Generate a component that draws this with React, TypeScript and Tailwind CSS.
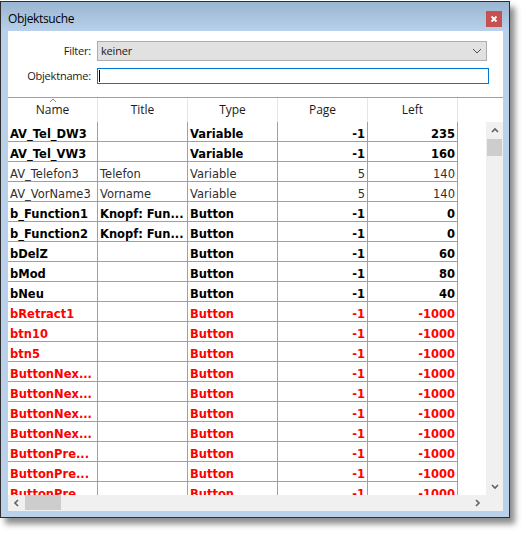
import React from "react";

type Row = { name: string; title: string; type: string; page: string; left: string; s: "b" | "n" | "r" };

const rows: Row[] = [
  { name: "AV_Tel_DW3", title: "", type: "Variable", page: "-1", left: "235", s: "b" },
  { name: "AV_Tel_VW3", title: "", type: "Variable", page: "-1", left: "160", s: "b" },
  { name: "AV_Telefon3", title: "Telefon", type: "Variable", page: "5", left: "140", s: "n" },
  { name: "AV_VorName3", title: "Vorname", type: "Variable", page: "5", left: "140", s: "n" },
  { name: "b_Function1", title: "Knopf: Fun...", type: "Button", page: "-1", left: "0", s: "b" },
  { name: "b_Function2", title: "Knopf: Fun...", type: "Button", page: "-1", left: "0", s: "b" },
  { name: "bDelZ", title: "", type: "Button", page: "-1", left: "60", s: "b" },
  { name: "bMod", title: "", type: "Button", page: "-1", left: "80", s: "b" },
  { name: "bNeu", title: "", type: "Button", page: "-1", left: "40", s: "b" },
  { name: "bRetract1", title: "", type: "Button", page: "-1", left: "-1000", s: "r" },
  { name: "btn10", title: "", type: "Button", page: "-1", left: "-1000", s: "r" },
  { name: "btn5", title: "", type: "Button", page: "-1", left: "-1000", s: "r" },
  { name: "ButtonNex...", title: "", type: "Button", page: "-1", left: "-1000", s: "r" },
  { name: "ButtonNex...", title: "", type: "Button", page: "-1", left: "-1000", s: "r" },
  { name: "ButtonNex...", title: "", type: "Button", page: "-1", left: "-1000", s: "r" },
  { name: "ButtonNex...", title: "", type: "Button", page: "-1", left: "-1000", s: "r" },
  { name: "ButtonPre...", title: "", type: "Button", page: "-1", left: "-1000", s: "r" },
  { name: "ButtonPre...", title: "", type: "Button", page: "-1", left: "-1000", s: "r" },
  { name: "ButtonPre...", title: "", type: "Button", page: "-1", left: "-1000", s: "r" },
];

const styleCls = {
  b: "font-bold text-black",
  n: "font-normal text-[#2e2e2e]",
  r: "font-bold text-[#ff0000]",
};

const cell = "w-[90px] shrink-0 h-[20px] border-r border-b border-[#a0a0a0] px-[2px] pt-[5px] leading-[14px] whitespace-nowrap overflow-hidden";

function Chevron({ dir }: { dir: "up" | "down" | "left" | "right" }) {
  const d =
    dir === "up"
      ? "M1 5 L4 2 L7 5"
      : dir === "down"
      ? "M1 2 L4 5 L7 2"
      : dir === "left"
      ? "M5 1 L2 4 L5 7"
      : "M2 1 L5 4 L2 7";
  return (
    <svg width="8" height="8" viewBox="0 0 8 8">
      <path d={d} fill="none" stroke="#606060" strokeWidth="1.6" />
    </svg>
  );
}

export default function App() {
  const headers = ["Name", "Title", "Type", "Page", "Left"];
  return (
    <div className="w-[526px] h-[534px] bg-white pt-[1px]">
      <div className="w-[510px] h-[517px] border border-[#2e2e2e] bg-[#b9d1ea] flex flex-col shadow-[5px_6px_6px_rgba(0,0,0,0.45)]">
        {/* title bar */}
        <div className="h-[29px] shrink-0 bg-gradient-to-b from-[#9ab5d1] to-[#b9d1ea] flex items-start justify-between pl-[7px] pr-[7px] pt-[9px]">
          <span className="text-[12px] leading-[16px] text-black tracking-[-0.35px] font-['Open_Sans',sans-serif]">Objektsuche</span>
          <div className="w-[16px] h-[16px] bg-[#c75050] flex items-center justify-center">
            <svg width="8" height="8" viewBox="0 0 8 8">
              <path d="M1.5 1.5 L6.5 6.5 M6.5 1.5 L1.5 6.5" stroke="white" strokeWidth="1.8" />
            </svg>
          </div>
        </div>
        {/* client */}
        <div className="ml-[7px] mr-[6px] h-[480px] bg-white flex flex-col font-['Open_Sans',sans-serif]">
          <div className="mt-[10px] h-[20px] flex items-center">
            <div className="w-[83px] text-right text-[11px] tracking-[-0.2px] text-[#1a1a1a]">Filter:</div>
            <div className="ml-[6px] w-[390px] h-[20px] border border-[#adadad] bg-[#e1e1e1] flex items-center justify-between pl-[3px] pr-[4px]">
              <span className="text-[11px] text-[#1a1a1a] tracking-[-0.2px]">keiner</span>
              <svg width="10" height="6" viewBox="0 0 10 6">
                <path d="M1 1 L5 5 L9 1" fill="none" stroke="#505050" strokeWidth="1" />
              </svg>
            </div>
          </div>
          <div className="mt-[7px] h-[16px] flex items-center">
            <div className="w-[83px] text-right text-[11px] tracking-[-0.2px] text-[#1a1a1a]">Objektname:</div>
            <div className="ml-[6px] w-[392px] h-[16px] border border-[#0078d7] flex items-center pl-[1px]">
              <div className="w-[1px] h-[12px] bg-black" />
            </div>
          </div>
          {/* grid */}
          <div className="mt-[13px] flex-1 min-h-0 flex flex-col">
            <div className="h-[25px] shrink-0 border-t border-[#a0a0a0] flex">
              {headers.map((h) => (
                <div key={h} className="relative w-[90px] shrink-0 border-r border-[#e5e5e5] text-center text-[12px] leading-[16px] pt-[4px] text-[#1a1a1a]">
                  {h === "Name" && (
                    <svg className="absolute left-[41px] top-[0px]" width="8" height="5" viewBox="0 0 8 5">
                      <path d="M1 4 L4 1 L7 4" fill="none" stroke="#8a8a8a" strokeWidth="1" />
                    </svg>
                  )}
                  {h}
                </div>
              ))}
              <div className="flex-1" />
            </div>
            <div className="flex-1 min-h-0 flex">
              <div className="flex-1 min-w-0 overflow-hidden font-['DejaVu_Sans',sans-serif] text-[11.5px]">
                {rows.map((r, i) => (
                  <div key={i} className={"flex h-[20px] " + styleCls[r.s]}>
                    <div className={cell}>{r.name}</div>
                    <div className={cell}>{r.title}</div>
                    <div className={cell}>{r.type}</div>
                    <div className={cell + " text-right"}>{r.page}</div>
                    <div className={cell + " text-right"}>{r.left}</div>
                    <div className="flex-1" />
                  </div>
                ))}
              </div>
              <div className="w-[17px] shrink-0 bg-[#f0f0f0] flex flex-col">
                <div className="h-[17px] flex items-center justify-center">
                  <Chevron dir="up" />
                </div>
                <div className="h-[17px] mx-[1px] bg-[#cdcdcd]" />
                <div className="flex-1" />
                <div className="h-[17px] flex items-center justify-center">
                  <Chevron dir="down" />
                </div>
              </div>
            </div>
            <div className="h-[16px] shrink-0 flex bg-[#f0f0f0]">
              <div className="w-[17px] flex items-center justify-center">
                <Chevron dir="left" />
              </div>
              <div className="w-[36px] h-[15px] bg-[#cdcdcd]" />
              <div className="flex-1" />
              <div className="w-[17px] flex items-center justify-center">
                <Chevron dir="right" />
              </div>
              <div className="w-[17px]" />
            </div>
          </div>
        </div>
      </div>
    </div>
  );
}
